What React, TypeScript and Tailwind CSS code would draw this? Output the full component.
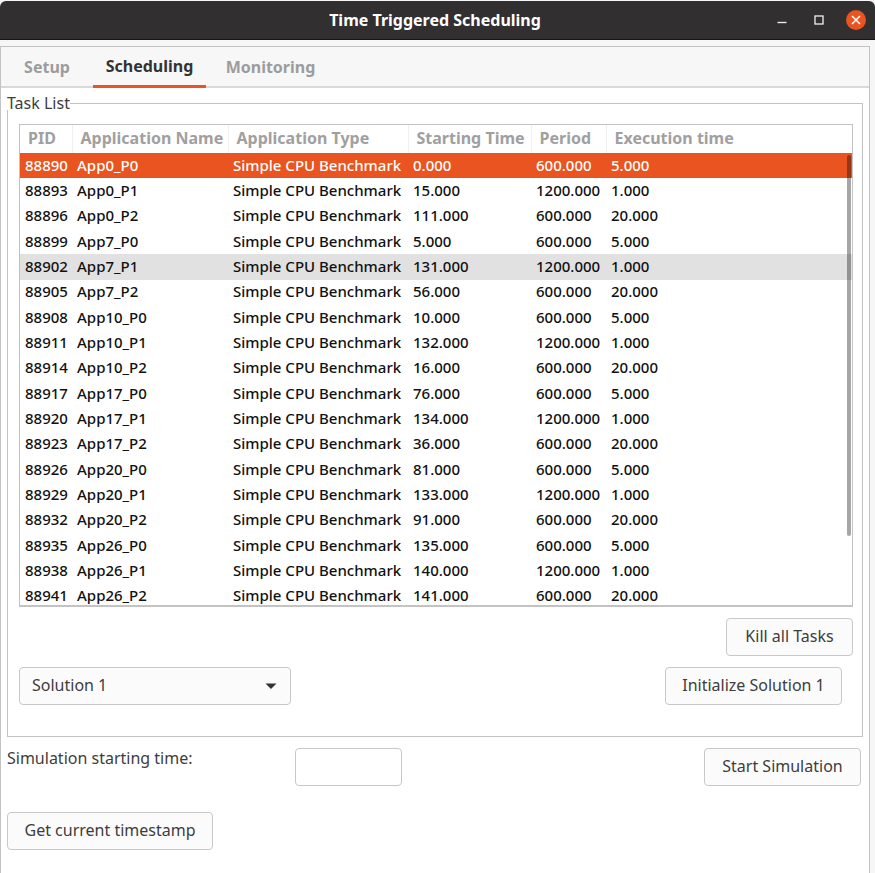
import type { ButtonHTMLAttributes } from "react";

type Task = {
  pid: number;
  name: string;
  start: string;
  period: string;
  execution: string;
};

const TASK_TYPE = "Simple CPU Benchmark";

const tasks: Task[] = [
  { pid: 88890, name: "App0_P0", start: "0.000", period: "600.000", execution: "5.000" },
  { pid: 88893, name: "App0_P1", start: "15.000", period: "1200.000", execution: "1.000" },
  { pid: 88896, name: "App0_P2", start: "111.000", period: "600.000", execution: "20.000" },
  { pid: 88899, name: "App7_P0", start: "5.000", period: "600.000", execution: "5.000" },
  { pid: 88902, name: "App7_P1", start: "131.000", period: "1200.000", execution: "1.000" },
  { pid: 88905, name: "App7_P2", start: "56.000", period: "600.000", execution: "20.000" },
  { pid: 88908, name: "App10_P0", start: "10.000", period: "600.000", execution: "5.000" },
  { pid: 88911, name: "App10_P1", start: "132.000", period: "1200.000", execution: "1.000" },
  { pid: 88914, name: "App10_P2", start: "16.000", period: "600.000", execution: "20.000" },
  { pid: 88917, name: "App17_P0", start: "76.000", period: "600.000", execution: "5.000" },
  { pid: 88920, name: "App17_P1", start: "134.000", period: "1200.000", execution: "1.000" },
  { pid: 88923, name: "App17_P2", start: "36.000", period: "600.000", execution: "20.000" },
  { pid: 88926, name: "App20_P0", start: "81.000", period: "600.000", execution: "5.000" },
  { pid: 88929, name: "App20_P1", start: "133.000", period: "1200.000", execution: "1.000" },
  { pid: 88932, name: "App20_P2", start: "91.000", period: "600.000", execution: "20.000" },
  { pid: 88935, name: "App26_P0", start: "135.000", period: "600.000", execution: "5.000" },
  { pid: 88938, name: "App26_P1", start: "140.000", period: "1200.000", execution: "1.000" },
  { pid: 88941, name: "App26_P2", start: "141.000", period: "600.000", execution: "20.000" },
];

const SELECTED_PID = 88890;
const HOVERED_PID = 88902;

const columns = [
  { title: "PID", width: "w-[52px]" },
  { title: "Application Name", width: "w-[156px]" },
  { title: "Application Type", width: "w-[180px]" },
  { title: "Starting Time", width: "w-[123px]" },
  { title: "Period", width: "w-[75px]" },
  { title: "Execution time", width: "" },
];

function rowColor(pid: number) {
  if (pid === SELECTED_PID) return "bg-[#e95420] text-white";
  if (pid === HOVERED_PID) return "bg-[#e1e1e1] text-[#111111]";
  return "text-[#111111]";
}

function Button({ className = "", ...props }: ButtonHTMLAttributes<HTMLButtonElement>) {
  return (
    <button
      type="button"
      className={`h-[38px] rounded border border-[#c8c8c8] bg-[#fbfbfb] pb-0.5 text-center whitespace-nowrap text-[#3d3d3d] ${className}`}
      {...props}
    />
  );
}

function TitleBar() {
  return (
    <header className="mt-px grid h-[39px] grid-cols-[1fr_auto_1fr] items-center rounded-t-md border-b border-[#161616] bg-[#322f30] pr-[9px] pl-1">
      <h1 className="col-start-2 font-bold text-white">Time Triggered Scheduling</h1>
      <div className="flex items-center justify-end">
        <button type="button" aria-label="Minimize" className="flex h-5 w-[37px] items-center justify-center">
          <svg width="10" height="10" viewBox="0 0 10 10">
            <path d="M0.5 7.5H9.5" stroke="#e8e8e8" strokeWidth="1.4" />
          </svg>
        </button>
        <button type="button" aria-label="Maximize" className="flex h-5 w-[37px] items-center justify-center">
          <svg width="10" height="10" viewBox="0 0 10 10">
            <rect x="1" y="1" width="8" height="8" fill="none" stroke="#f2f2f2" strokeWidth="1.3" />
          </svg>
        </button>
        <button type="button" aria-label="Close" className="ml-[9px] flex size-5 items-center justify-center rounded-full bg-[#e95420]">
          <svg width="10" height="10" viewBox="0 0 10 10">
            <path d="M1 1L9 9M9 1L1 9" stroke="#ffffff" strokeWidth="1.5" />
          </svg>
        </button>
      </div>
    </header>
  );
}

function Tabs() {
  return (
    <div role="tablist" className="flex h-[41px] border-b-2 border-[#d9d9d9] bg-[#f7f7f7] pl-2 font-bold text-[#9c9c9c]">
      <button type="button" role="tab" aria-selected="false" className="h-[39px] w-[76px]">
        Setup
      </button>
      <button
        type="button"
        role="tab"
        aria-selected="true"
        className="mx-2 h-[41px] w-[113px] border-b-3 border-[#e95420] text-[#333333]"
      >
        Scheduling
      </button>
      <button type="button" role="tab" aria-selected="false" className="h-[39px] w-[113px]">
        Monitoring
      </button>
    </div>
  );
}

function TaskTable() {
  return (
    <div className="relative h-[483px] overflow-hidden border border-b-2 border-[#c3c3c3] bg-white">
      <table className="h-[484px] w-full table-fixed border-collapse text-left text-[15px] whitespace-nowrap">
        <thead>
          <tr className="h-7 text-[#a0a0a0]">
            {columns.map((column, index) => (
              <th
                key={column.title}
                scope="col"
                className={`p-0 pb-0.5 pl-2 text-[16px] leading-5 font-bold ${column.width} ${index > 0 ? "border-l border-[#f0f0f0]" : ""}`}
              >
                {column.title}
              </th>
            ))}
          </tr>
        </thead>
        <tbody className="font-medium">
          {tasks.map((task) => (
            <tr key={task.pid} className={rowColor(task.pid)}>
              <td className="p-0 pb-0.5 pl-[5px]">{task.pid}</td>
              <td className="p-0 pb-0.5 pl-[5px]">{task.name}</td>
              <td className="p-0 pb-0.5 pl-[5px]">{TASK_TYPE}</td>
              <td className="p-0 pb-0.5 pl-[5px]">{task.start}</td>
              <td className="p-0 pb-0.5 pl-[5px]">{task.period}</td>
              <td className="p-0 pb-0.5 pl-[5px]">{task.execution}</td>
            </tr>
          ))}
        </tbody>
      </table>
      <div className="absolute top-[30px] right-px h-[381px] w-1 rounded-full bg-black/35" />
    </div>
  );
}

export default function App() {
  return (
    <div className="flex min-h-screen flex-col bg-[#f6f6f6] font-['Noto_Sans','Open_Sans',sans-serif] text-[16px] leading-5 text-[#3d3d3d]">
      <TitleBar />
      <main className="mt-1.5 mr-[5px] flex grow flex-col border border-b-0 border-[#c3c3c3] bg-white">
        <Tabs />
        <div className="pt-2 pr-2 pl-1.5">
          <fieldset className="-mr-0.5 border border-[#c3c3c3] pr-[9px] pb-[31px] pl-[11px]">
            <legend className="-ml-3 bg-white leading-[14px]">Task List</legend>
            <div className="pt-[14px]">
              <TaskTable />
            </div>
            <div className="mt-[11px] flex justify-end">
              <Button className="w-[127px]">Kill all Tasks</Button>
            </div>
            <div className="mt-[11px] flex justify-between pr-[11px]">
              <div className="relative w-[272px]">
                <select
                  aria-label="Solution"
                  defaultValue="1"
                  className="h-[38px] w-full appearance-none rounded border border-[#c8c8c8] bg-[#fbfbfb] pb-0.5 pl-3 text-[#3d3d3d]"
                >
                  <option value="1">Solution 1</option>
                </select>
                <svg
                  className="pointer-events-none absolute top-4 right-[14px]"
                  width="12"
                  height="6"
                  viewBox="0 0 12 6"
                >
                  <path d="M0.5 0.5H11.5L6 6Z" fill="#333333" />
                </svg>
              </div>
              <Button className="w-[177px]">Initialize Solution 1</Button>
            </div>
          </fieldset>
          <div className="mt-[11px] flex items-start">
            <label htmlFor="start-time" className="w-72 shrink-0">
              Simulation starting time:
            </label>
            <input
              id="start-time"
              type="text"
              className="h-[38px] w-[107px] rounded border border-[#c8c8c8] bg-white px-2"
            />
            <Button className="ml-auto w-[157px]">Start Simulation</Button>
          </div>
          <Button className="mt-[26px] w-[206px]">Get current timestamp</Button>
        </div>
      </main>
    </div>
  );
}
